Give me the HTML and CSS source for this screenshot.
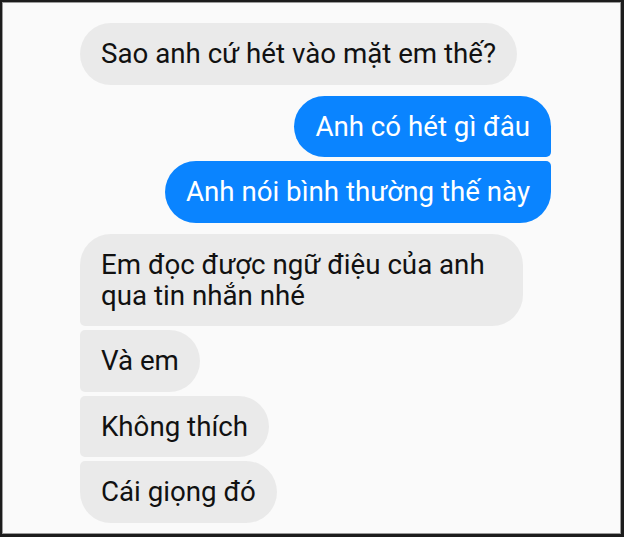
FILE: index.html
```html
<!DOCTYPE html>
<html lang="vi">
<head>
<meta charset="utf-8">
<link rel="stylesheet" href="styles.css">
</head>
<body>
<div class="frame">
  <div class="chat">
    <div class="group them">
      <div class="bubble solo">Sao anh cứ hét vào mặt em thế?</div>
    </div>
    <div class="group me">
      <div class="bubble first">Anh có hét gì đâu</div>
      <div class="bubble last">Anh nói bình thường thế này</div>
    </div>
    <div class="group them">
      <div class="bubble first">Em đọc được ngữ điệu của anh qua tin nhắn nhé</div>
      <div class="bubble mid">Và em</div>
      <div class="bubble mid">Không thích</div>
      <div class="bubble last">Cái giọng đó</div>
    </div>
  </div>
</div>
</body>
</html>
```

FILE: styles.css
```css
html, body {
  margin: 0;
  padding: 0;
}
body {
  width: 624px;
  height: 537px;
  background: #fafafa;
  font-family: Roboto, "Liberation Sans", sans-serif;
}
.frame {
  box-sizing: border-box;
  width: 624px;
  height: 537px;
  border: 2px solid #1c1c1c;
  border-right-width: 3px;
  border-bottom-width: 3px;
  box-shadow: inset 0 0 0 1px #9a9a9a;
  background: #fafafa;
}
.chat {
  display: flex;
  flex-direction: column;
  gap: 11px;
  padding: 21px 70px 0 78px;
}
.group {
  display: flex;
  flex-direction: column;
  gap: 4px;
}
.group.them { align-items: flex-start; }
.group.me { align-items: flex-end; }
.bubble {
  box-sizing: border-box;
  max-width: 443px;
  font-size: 27.7px;
  line-height: 31px;
  padding: 15.25px 21px;
  border-radius: 31px;
}
.them .bubble {
  background: #eaeaea;
  color: #111;
}
.me .bubble {
  background: #0a84ff;
  color: #fff;
}
.me .bubble.first { border-bottom-right-radius: 5px; }
.me .bubble.last { border-top-right-radius: 5px; }
.them .bubble.first { border-bottom-left-radius: 5px; }
.them .bubble.mid { border-top-left-radius: 5px; border-bottom-left-radius: 5px; }
.them .bubble.last { border-top-left-radius: 5px; }
.them .bubble.solo { border-radius: 31px; }
```
